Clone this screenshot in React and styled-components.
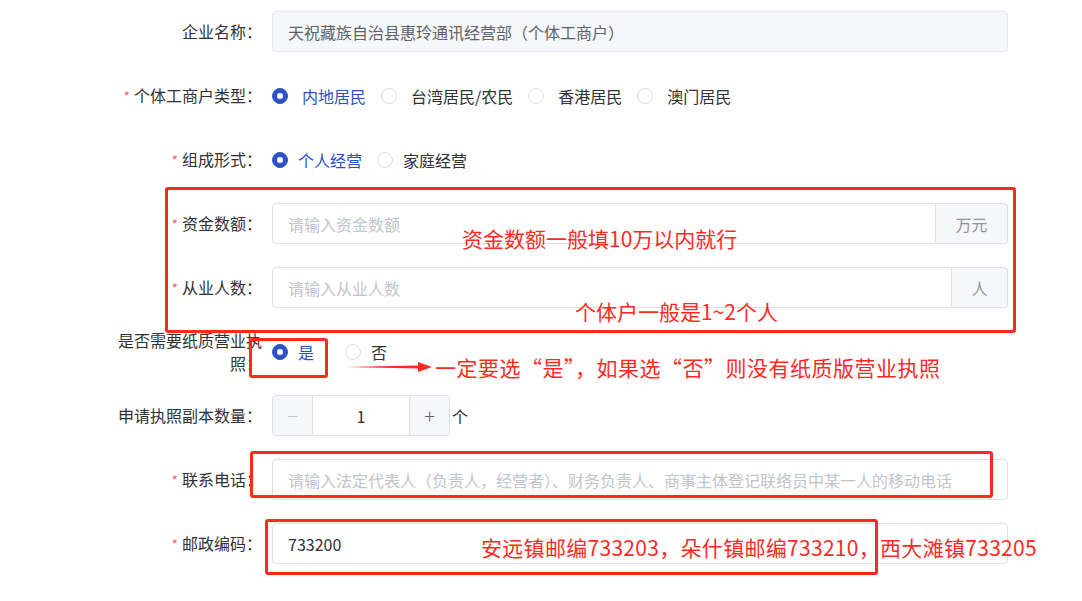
import React from 'react'
import styled, { createGlobalStyle } from 'styled-components'

const GlobalStyle = createGlobalStyle`
  * { box-sizing: border-box; }
  body {
    margin: 0;
    background: #fff;
    font-family: "Noto Sans CJK SC", "Noto Sans", sans-serif;
  }
`

const Page = styled.div`
  position: relative;
  width: 1082px;
  height: 601px;
  overflow: hidden;
  padding: 11px 0 0 112px;
`

const Form = styled.div`
  display: flex;
  flex-direction: column;
  gap: 23px;
`

const FormItem = styled.div`
  display: flex;
  align-items: center;
  height: 41px;
`

const Label = styled.label`
  flex: 0 0 160px;
  padding-right: 10px;
  text-align: right;
  font-size: 16px;
  line-height: ${p => (p.$wrap ? '23px' : '41px')};
  color: #303133;
`

const Star = styled.span`
  color: #f56c6c;
  margin-right: 4px;
  font-size: 14px;
`

const Content = styled.div`
  flex: 0 0 736px;
  display: flex;
  align-items: center;
`

const InputBox = styled.div`
  flex: 1;
  height: 41px;
  display: flex;
  align-items: center;
  padding: 0 15px;
  border: 1px solid #dcdfe6;
  border-radius: ${p => (p.$append ? '4px 0 0 4px' : '4px')};
  background: ${p => (p.$disabled ? '#f5f7fa' : '#fff')};
  border-color: ${p => (p.$disabled ? '#e4e7ed' : '#dcdfe6')};
  font-size: 16px;
  color: ${p => (p.$disabled ? '#606266' : p.$placeholder ? '#c0c4cc' : '#303133')};
  white-space: nowrap;
  overflow: hidden;
`

const Append = styled.div`
  height: 41px;
  flex: 0 0 ${p => p.$width}px;
  display: flex;
  align-items: center;
  justify-content: center;
  background: #f5f7fa;
  border: 1px solid #dcdfe6;
  border-left: none;
  border-radius: 0 4px 4px 0;
  color: #909399;
  font-size: 16px;
`

const RadioGroup = styled.div`
  display: flex;
  align-items: center;
`

const Radio = styled.div`
  display: flex;
  align-items: center;
  margin-right: ${p => p.$after}px;
  font-size: 16px;
  color: ${p => (p.$checked ? '#2d50c8' : '#303133')};
`

const RadioDot = styled.span`
  flex: 0 0 16px;
  width: 16px;
  height: 16px;
  border-radius: 50%;
  margin-right: ${p => p.$gap}px;
  border: 1px solid ${p => (p.$checked ? '#2d50c8' : '#dcdfe6')};
  background: ${p => (p.$checked ? '#2d50c8' : '#fff')};
  display: flex;
  align-items: center;
  justify-content: center;
  &::after {
    content: '';
    width: 6px;
    height: 6px;
    border-radius: 50%;
    background: #fff;
    display: ${p => (p.$checked ? 'block' : 'none')};
  }
`

const Stepper = styled.div`
  width: 178px;
  height: 41px;
  display: flex;
  border: 1px solid #dcdfe6;
  border-radius: 4px;
  overflow: hidden;
`

const StepButton = styled.div`
  flex: 0 0 40px;
  display: flex;
  align-items: center;
  justify-content: center;
  background: #f5f7fa;
  color: ${p => (p.$disabled ? '#c0c4cc' : '#606266')};
  font-size: 20px;
  font-weight: 300;
  border-left: ${p => (p.$side === 'right' ? '1px solid #dcdfe6' : 'none')};
  border-right: ${p => (p.$side === 'left' ? '1px solid #dcdfe6' : 'none')};
`

const StepValue = styled.div`
  flex: 1;
  display: flex;
  align-items: center;
  justify-content: center;
  font-size: 16px;
  color: #303133;
`

const Unit = styled.span`
  margin-left: 2px;
  font-size: 16px;
  color: #303133;
`

const Mark = styled.div`
  position: absolute;
  left: ${p => p.$x}px;
  top: ${p => p.$y}px;
  width: ${p => p.$w}px;
  height: ${p => p.$h}px;
  border: 3px solid #ff2a1f;
  border-radius: 3px;
  pointer-events: none;
`

const Note = styled.div`
  position: absolute;
  left: ${p => p.$x}px;
  top: ${p => p.$y}px;
  font-size: 21px;
  line-height: 28px;
  letter-spacing: ${p => p.$spacing || 0}px;
  color: #ff2a1f;
  white-space: nowrap;
`

const Arrow = styled.svg`
  position: absolute;
  left: 344px;
  top: 358px;
`

const Required = ({ children }) => (
  <>
    <Star>*</Star>
    {children}
  </>
)

const RadioItem = ({ label, checked, gap = 10, after = 15 }) => (
  <Radio $checked={checked} $after={after}>
    <RadioDot $checked={checked} $gap={gap} />
    {label}
  </Radio>
)

const App = () => (
  <Page>
    <GlobalStyle />
    <Form>
      <FormItem>
        <Label>企业名称：</Label>
        <Content>
          <InputBox $disabled>天祝藏族自治县惠玲通讯经营部（个体工商户）</InputBox>
        </Content>
      </FormItem>

      <FormItem>
        <Label><Required>个体工商户类型：</Required></Label>
        <Content>
          <RadioGroup>
            <RadioItem label="内地居民" checked gap={14} />
            <RadioItem label="台湾居民/农民" gap={14} />
            <RadioItem label="香港居民" gap={14} />
            <RadioItem label="澳门居民" gap={14} />
          </RadioGroup>
        </Content>
      </FormItem>

      <FormItem>
        <Label><Required>组成形式：</Required></Label>
        <Content>
          <RadioGroup>
            <RadioItem label="个人经营" checked />
            <RadioItem label="家庭经营" />
          </RadioGroup>
        </Content>
      </FormItem>

      <FormItem>
        <Label><Required>资金数额：</Required></Label>
        <Content>
          <InputBox $placeholder $append>请输入资金数额</InputBox>
          <Append $width={72}>万元</Append>
        </Content>
      </FormItem>

      <FormItem>
        <Label><Required>从业人数：</Required></Label>
        <Content>
          <InputBox $placeholder $append>请输入从业人数</InputBox>
          <Append $width={56}>人</Append>
        </Content>
      </FormItem>

      <FormItem>
        <Label $wrap>是否需要纸质营业执照：</Label>
        <Content>
          <RadioGroup>
            <RadioItem label="是" checked after={31} />
            <RadioItem label="否" />
          </RadioGroup>
        </Content>
      </FormItem>

      <FormItem>
        <Label>申请执照副本数量：</Label>
        <Content>
          <Stepper>
            <StepButton $side="left" $disabled>−</StepButton>
            <StepValue>1</StepValue>
            <StepButton $side="right">+</StepButton>
          </Stepper>
          <Unit>个</Unit>
        </Content>
      </FormItem>

      <FormItem>
        <Label><Required>联系电话：</Required></Label>
        <Content>
          <InputBox $placeholder>
            请输入法定代表人（负责人，经营者）、财务负责人、商事主体登记联络员中某一人的移动电话
          </InputBox>
        </Content>
      </FormItem>

      <FormItem>
        <Label><Required>邮政编码：</Required></Label>
        <Content>
          <InputBox>733200</InputBox>
        </Content>
      </FormItem>
    </Form>

    <Mark $x={165} $y={187} $w={851} $h={146} />
    <Note $x={462} $y={224}>资金数额一般填10万以内就行</Note>
    <Note $x={575} $y={297}>个体户一般是1~2个人</Note>

    <Mark $x={249} $y={338} $w={79} $h={40} />
    <Arrow width="92" height="18" viewBox="0 0 92 18">
      <polygon points="2,9 74,7.5 74,4 88,9 74,14 74,10.5" fill="#ff2a1f" />
    </Arrow>
    <Note $x={435} $y={353} $spacing={0.5}>一定要选“是”，如果选“否”则没有纸质版营业执照</Note>

    <Mark $x={250} $y={451} $w={743} $h={47} />
    <Mark $x={265} $y={519} $w={613} $h={56} />
    <Note $x={481} $y={533} $spacing={0.3}>安远镇邮编733203，朵什镇邮编733210，西大滩镇733205</Note>
  </Page>
)

export default App
